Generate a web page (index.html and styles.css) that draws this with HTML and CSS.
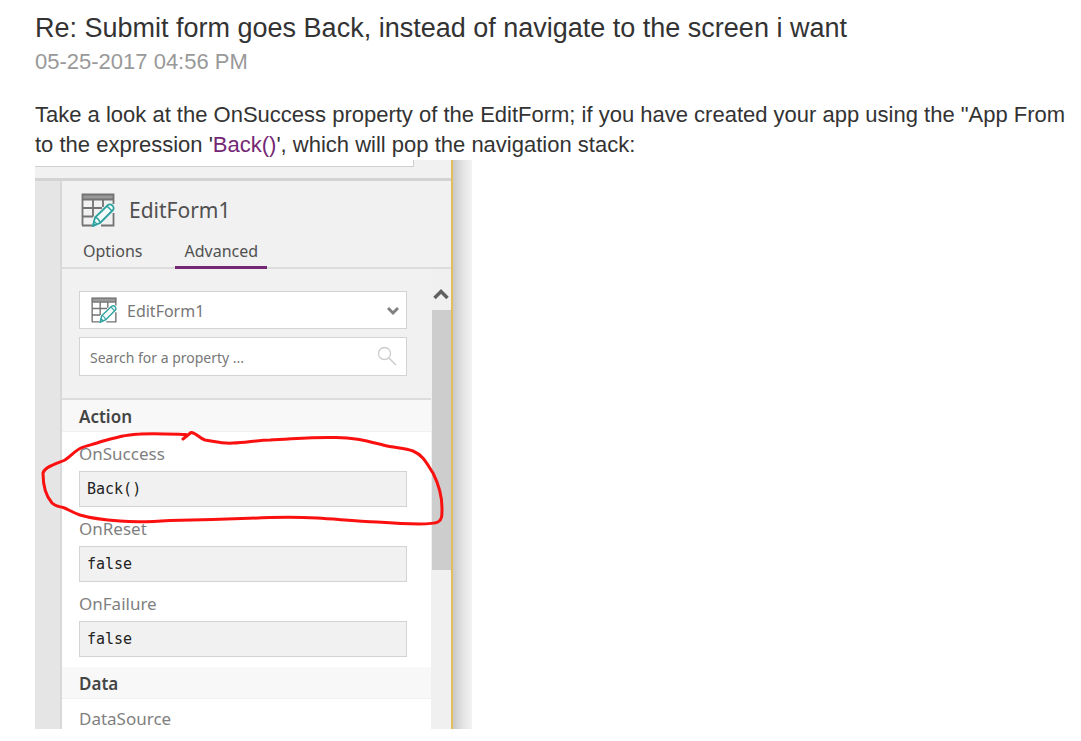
FILE: index.html
```html
<!DOCTYPE html>
<html lang="en">
<head>
<meta charset="utf-8">
<title>Re: Submit form goes Back</title>
<link rel="stylesheet" href="styles.css">
</head>
<body>
<svg class="defs" aria-hidden="true">
  <symbol id="form-icon" viewBox="0 0 34 34">
    <rect x="1" y="1" width="32" height="5" fill="#999"/>
    <path d="M1.500 32.500V1.500H32.500V11M1 6.500H33M1.500 15H21M1.500 23.500H12M12 6.500V23.500M22 6.500V14M1 32.500H11M20 32.500H32.500V20" fill="none" stroke="#737373" stroke-width="1.800"/>
    <path d="M12 33 14 24.500 27 12Q29 10.500 31.500 12.500 33.500 15 32 17L19 30Z" fill="#f5fafa" stroke="#2fa3a1" stroke-width="1.800" stroke-linejoin="round"/>
    <path d="M14 24.500Q18 25 19 30M26 13 31 18M12 33 13 28.500 16 31Z" fill="none" stroke="#2fa3a1" stroke-width="1.500"/>
  </symbol>
</svg>
<article class="post">
  <h1 class="post-title">Re: Submit form goes Back, instead of navigate to the screen i want</h1>
  <time class="post-date" datetime="2017-05-25T16:56">05-25-2017 04:56 PM</time>
  <p class="post-body">Take a look at the OnSuccess property of the EditForm; if you have created your app using the "App From<br>to the expression '<a class="post-link" href="#onsuccess">Back()</a>', which will pop the navigation stack:</p>

  <figure class="shot">
    <div class="app">
      <div class="topbar"><div class="formula"></div></div>
      <div class="workspace">
        <section class="panel">
          <header class="panel-head">
            <svg class="head-icon" aria-hidden="true"><use href="#form-icon"/></svg>
            <h2 class="panel-title">EditForm1</h2>
          </header>
          <nav class="tabs">
            <button class="tab" type="button">Options</button>
            <button class="tab tab-active" type="button">Advanced</button>
          </nav>
          <div class="scroller">
            <div class="content">
              <div class="filters">
                <div class="control">
                  <svg class="select-icon" aria-hidden="true"><use href="#form-icon"/></svg>
                  <select class="select" aria-label="Control"><option>EditForm1</option></select>
                  <svg class="chevron" viewBox="0 0 12 10" aria-hidden="true"><path d="M1 2 6 7 11 2" fill="none" stroke="#808080" stroke-width="3"/></svg>
                </div>
                <div class="control">
                  <input class="search" type="search" aria-label="Search for a property" placeholder="Search for a property ...">
                  <svg class="lens" viewBox="0 0 20 20" aria-hidden="true"><circle cx="7.500" cy="7.500" r="6" fill="none" stroke="#ccc" stroke-width="1.300"/><path d="M12 12 19 19" stroke="#ccc" stroke-width="1.500"/></svg>
                </div>
              </div>
              <h3 class="group">Action</h3>
              <div class="fields">
                <div class="field"><label class="label" for="onsuccess">OnSuccess</label><input class="value" id="onsuccess" value="Back()"></div>
                <div class="field"><label class="label" for="onreset">OnReset</label><input class="value" id="onreset" value="false"></div>
                <div class="field"><label class="label" for="onfailure">OnFailure</label><input class="value" id="onfailure" value="false"></div>
              </div>
              <h3 class="group">Data</h3>
              <div class="cut">DataSource</div>
            </div>
            <div class="scrollbar">
              <svg class="up" viewBox="0 0 16 12" aria-hidden="true"><path d="M1.500 10 8 3.500 14.500 10" fill="none" stroke="#606060" stroke-width="3.500"/></svg>
              <div class="thumb"></div>
            </div>
          </div>
        </section>
      </div>
    </div>
    <div class="shade"></div>
    <svg class="ink" viewBox="0 0 437 569" aria-hidden="true"><path d="M148 279 156 272.500C162 273 164 278 170 280C178 281 188 284 198 283C210 283 222 280 235 280C258 279 278 277 298 277.500C318 277 332 281 348 285C360 288 369 288 378 291C388 295 392 304 398 313C404 325 407 337 407 348C407 356 407 360 403 362C397 365 370 364 342 362C320 361 300 359 282 358C265 357 250 357 235 357.500C200 359 165 360 135 360.500C115 362 95 362 85 361C70 360 55 358 45 355C36 352 33 349 28 347.500C22 346 20 346 17 343C10 335 8 325 8 313C10 306 24 303 30 300C37 295 40 291 45 288.500C50 286 56 285 62 283C70 280 80 278 88 276C94 275 99 274 105 274C120 273 137 274 151 274.500" fill="none" stroke="#fb1010" stroke-width="3" stroke-linecap="round" stroke-linejoin="round"/></svg>
  </figure>
</article>
</body>
</html>
```
FILE: styles.css
```css
* { box-sizing: border-box; }
body { margin: 0; background: #fff; color: #333; font-family: "Liberation Sans", Arial, sans-serif; overflow-x: hidden; }
.defs { display: none; }
.post { padding: 12px 0 12px 35px; }
.post-title { margin: 0; font-size: 27px; line-height: 32px; font-weight: 400; white-space: nowrap; }
.post-date { display: block; font-size: 22px; line-height: 36px; color: #999; }
.post-body { margin: 20px 0 0; font-size: 22px; line-height: 30px; white-space: nowrap; }
.post-link { color: #742774; text-decoration: none; }

.shot { position: relative; display: flex; width: 437px; margin: 0; font-family: "Noto Sans", "Open Sans", sans-serif; }
.app { flex: 1; border-right: 2px solid #e6bd5c; }
.shade { width: 19px; background: linear-gradient(90deg, #c8c8c8, #e2e2e2 50%, #f3f3f3); }
.topbar { height: 21px; padding-right: 37px; background: #f1f1f1; border-bottom: 3px solid #d3d3d3; }
.formula { height: 7px; background: #fff; border: solid #d0d0d0; border-width: 0 1px 1px 0; }
.workspace { padding-left: 25px; background: #e5e5e5; }
.panel { background: #f1f1f1; border-left: 2px solid #d8d8d8; color: #505050; }
.panel-head { display: flex; align-items: center; gap: 14px; height: 56px; padding: 2px 19px 0; }
.head-icon { width: 34px; height: 34px; }
.panel-title { margin: 0; font-size: 21px; font-weight: 400; line-height: 30px; }
.tabs { display: flex; gap: 24px; padding-left: 12px; border-bottom: 2px solid #dcdcdc; }
.tab { margin: 0 0 -2px; padding: 2px 9px; border: 0; border-bottom: 3px solid transparent; background: none; color: #505050; font: 16px/25px "Noto Sans", sans-serif; }
.tab-active { border-color: #742774; }
.scroller { display: flex; }
.content { flex: 1; background: #fff; }
.filters { display: grid; gap: 8px; padding: 22px 24px 22px 17px; background: #f1f1f1; border-bottom: 2px solid #dcdcdc; }
.control { position: relative; }
.select, .search { display: block; width: 100%; height: 38px; margin: 0; border: 1px solid #d3d3d3; border-radius: 0; background: #fff; appearance: none; color: #777; font: 16px "Noto Sans", sans-serif; }
.select { padding: 2px 30px 0 47px; }
.search { height: 39px; padding: 1px 40px 0 10px; font-size: 14px; }
.search::placeholder { color: #777; }
.select-icon { position: absolute; left: 12px; top: 6px; width: 26px; height: 26px; }
.chevron { position: absolute; right: 8px; top: 15px; width: 12px; height: 10px; }
.lens { position: absolute; right: 10px; top: 9px; width: 20px; height: 20px; }
.group { margin: 0; padding: 2px 17px 0; border-bottom: 1px solid #f0f0f0; background: #f8f8f8; font-size: 17px; line-height: 29px; font-weight: 600; color: #444; }
.fields { display: grid; gap: 5px; padding: 5px 24px 10px 17px; }
.label { display: block; font-size: 17px; line-height: 34px; color: #7f7f7f; }
.value { display: block; width: 100%; height: 36px; margin: 0; padding: 0 7px; border: 1px solid #d3d3d3; border-radius: 0; background: #f1f1f1; color: #222; font: 15px "DejaVu Sans Mono", monospace; }
.cut { padding: 10px 17px 0; font-size: 17px; line-height: 20px; color: #7f7f7f; }
.scrollbar { width: 20px; padding-top: 19px; background: #f0f0f0; }
.up { display: block; width: 16px; height: 12px; margin: 0 auto 10px; }
.thumb { height: 260px; margin-left: 1px; background: #cdcdcd; }
.ink { position: absolute; inset: 0; width: 100%; height: 569px; }
```
